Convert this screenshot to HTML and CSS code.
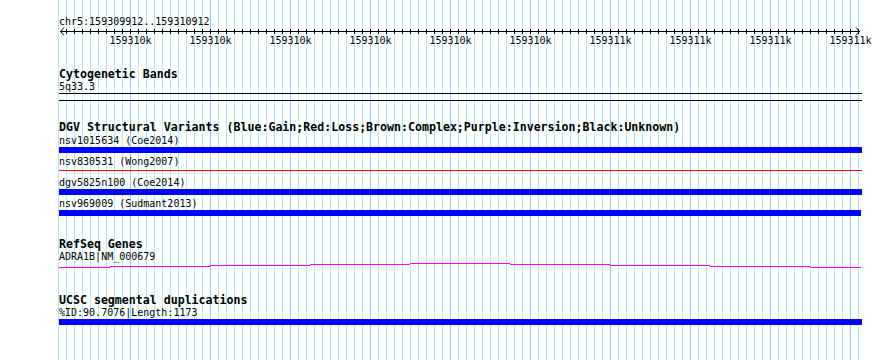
FILE: index.html
```html
<!DOCTYPE html>
<html lang="en">
<head>
  <meta charset="UTF-8">
  <title>chr5:159309912..159310912</title>
  <link rel="stylesheet" href="styles.css">
</head>
<body>
<div class="panel">
  <!-- ruler: page coordinates, panel content starts at x=58 -->
  <svg class="ruler" width="832" height="68" viewBox="58 0 832 68">
    <defs>
      <pattern id="ticks" patternUnits="userSpaceOnUse" x="58" y="29" width="8" height="5">
        <rect x="0" y="0" width="1" height="5" fill="#000"/>
      </pattern>
    </defs>
    <text x="59" y="25">chr5:159309912..159310912</text>
    <rect x="60" y="31" width="800" height="1" fill="#000"/>
    <rect x="66" y="29" width="793" height="5" fill="url(#ticks)"/>
    <path class="arrow" d="M64 27.5 L60.5 31.5 L64 35.5 M856 27.5 L859.5 31.5 L856 35.5"/>
    <g class="tick-labels">
      <text x="130.5" y="44">159310k</text>
      <text x="210.5" y="44">159310k</text>
      <text x="290.5" y="44">159310k</text>
      <text x="370.5" y="44">159310k</text>
      <text x="450.5" y="44">159310k</text>
      <text x="530.5" y="44">159310k</text>
      <text x="610.5" y="44">159311k</text>
      <text x="690.5" y="44">159311k</text>
      <text x="770.5" y="44">159311k</text>
      <text x="850.5" y="44">159311k</text>
    </g>
  </svg>

  <section class="track">
    <div class="track-title">Cytogenetic Bands</div>
    <div class="feature-label">5q33.3</div>
    <div class="band"></div>
  </section>

  <section class="track track-dgv">
    <div class="track-title">DGV Structural Variants (Blue:Gain;Red:Loss;Brown:Complex;Purple:Inversion;Black:Unknown)</div>
    <div class="feature">
      <div class="feature-label">nsv1015634 (Coe2014)</div>
      <div class="bar gain"></div>
    </div>
    <div class="feature">
      <div class="feature-label">nsv830531 (Wong2007)</div>
      <div class="bar loss"></div>
    </div>
    <div class="feature">
      <div class="feature-label">dgv5825n100 (Coe2014)</div>
      <div class="bar gain"></div>
    </div>
    <div class="feature">
      <div class="feature-label">nsv969009 (Sudmant2013)</div>
      <div class="bar gain short"></div>
    </div>
  </section>

  <section class="track track-refseq">
    <div class="track-title">RefSeq Genes</div>
    <div class="feature-label">ADRA1B|NM_000679</div>
    <svg class="gene" width="803" height="5" viewBox="59 263 803 5">
      <rect x="59" y="267" width="51" height="1"/>
      <rect x="110" y="266" width="100" height="1"/>
      <rect x="210" y="265" width="100" height="1"/>
      <rect x="310" y="264" width="100" height="1"/>
      <rect x="410" y="263" width="100" height="1"/>
      <rect x="510" y="264" width="100" height="1"/>
      <rect x="610" y="265" width="100" height="1"/>
      <rect x="710" y="266" width="100" height="1"/>
      <rect x="810" y="267" width="51" height="1"/>
    </svg>
  </section>

  <section class="track track-segdup">
    <div class="track-title">UCSC segmental duplications</div>
    <div class="feature-label">%ID:90.7076|Length:1173</div>
    <div class="bar gain"></div>
  </section>
</div>
</body>
</html>
```

FILE: styles.css
```css
body {
  margin: 0;
  background: #fff;
  color: #000;
  font-family: "DejaVu Sans Mono", monospace;
}

/* grid: minor line every 8px from x=58, major every 80px from x=130 */
.panel {
  width: 801px;
  height: 360px;
  padding: 0 31px 0 58px;
  background-image:
    linear-gradient(to right, #87cefa 0 1px, transparent 1px),
    linear-gradient(to right, #afeeee 0 1px, transparent 1px);
  background-size: 80px 100%, 8px 100%;
  background-position: 72px 0, 0 0;
  background-origin: content-box;
  background-clip: content-box;
}

.ruler {
  display: block;
  overflow: visible;
}
.ruler text {
  font-family: "DejaVu Sans Mono", monospace;
  font-size: 10px;
  fill: #000;
}
.tick-labels text {
  text-anchor: middle;
}
.arrow {
  fill: none;
  stroke: #000;
  stroke-width: 1;
}

.track {
  margin-left: 1px;
  width: 803px;
}
.track-title {
  font-weight: bold;
  font-size: 11.6px;
  line-height: 13px;
  white-space: nowrap;
}
.feature-label {
  font-size: 10px;
  line-height: 12px;
  white-space: nowrap;
}

.band {
  height: 6px;
  border-top: 1px solid #000;
  border-bottom: 1px solid #000;
}

.track-dgv {
  margin-top: 20px;
}
.track-dgv .track-title {
  margin-bottom: 1px;
}
.feature {
  padding-bottom: 3px;
}
.bar {
  height: 6px;
}
.bar.gain {
  background: #0000ff;
}
.bar.loss {
  height: 1px;
  margin: 2px 0 3px;
  background: #ff0000;
}
.bar.short {
  width: 802px;
}

.track-refseq {
  margin-top: 19px;
}
.gene {
  display: block;
  fill: #ff00ff;
  shape-rendering: crispEdges;
}

.track-segdup {
  margin-top: 26px;
}
```
